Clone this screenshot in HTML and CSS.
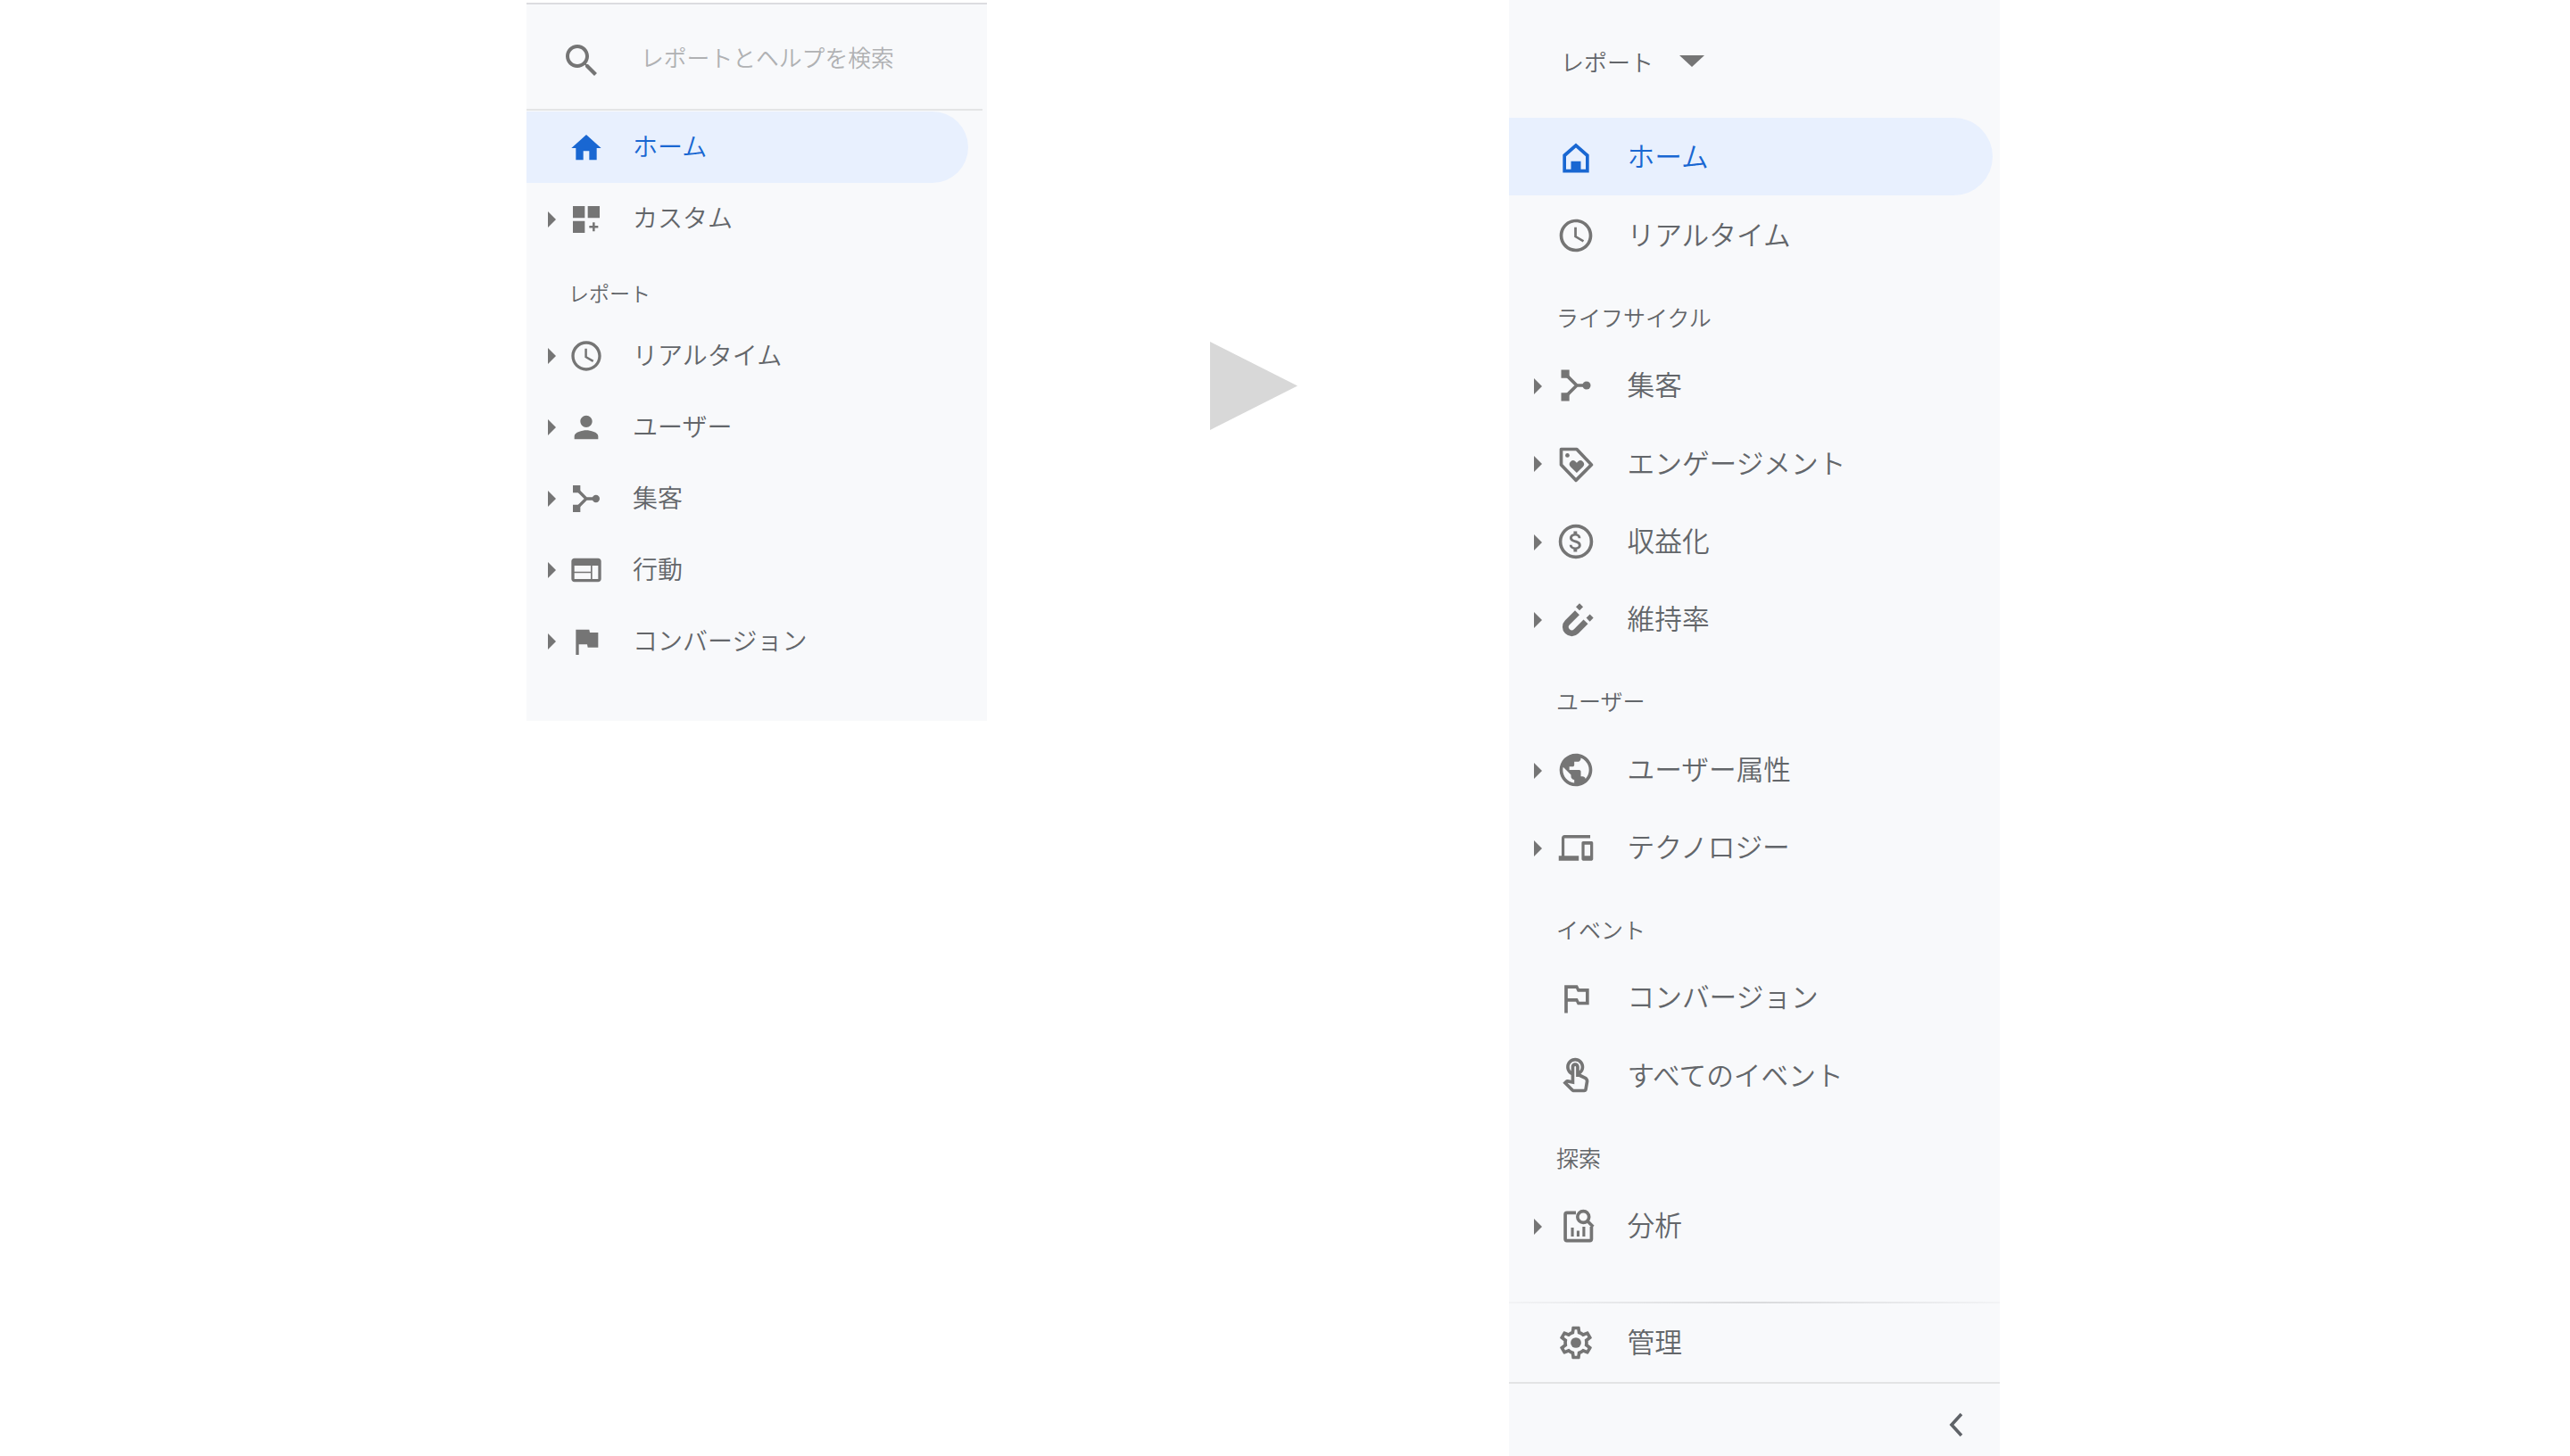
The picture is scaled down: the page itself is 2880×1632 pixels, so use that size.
FILE: index.html
```html
<!DOCTYPE html>
<html lang="ja">
<head>
    <meta charset="UTF-8">
    <title>レポート ナビゲーション</title>
    <link rel="stylesheet" href="styles.css">
</head>
<body>
    <div class="page">
        <div class="panelOld">
            <div class="searchBox">
                <svg class="searchIcon" viewBox="0 0 24 24"><path d="M15.5 14h-.79l-.28-.27C15.41 12.59 16 11.11 16 9.5 16 5.91 13.09 3 9.5 3S3 5.91 3 9.5 5.91 16 9.5 16c1.61 0 3.09-.59 4.23-1.57l.27.28v.79l5 4.99L20.49 19l-4.99-5zm-6 0C7.01 14 5 11.99 5 9.5S7.01 5 9.5 5 14 7.01 14 9.5 11.99 14 9.5 14z"/></svg>
                <span class="searchText">レポートとヘルプを検索</span>
            </div>
            <div class="row active">
                <span class="arrow none"></span>
                <svg class="icon" viewBox="0 0 24 24"><path d="M10 20v-6h4v6h5v-8h3L12 3 2 12h3v8z"/></svg>
                <span class="label labelUp">ホーム</span>
            </div>
            <div class="row">
                <span class="arrow"></span>
                <svg class="icon" viewBox="0 0 24 24"><path d="M3 3h8v8H3zM13 3h8v8h-8zM3 13h8v8H3zM16.25 14h1.5v2.25H20v1.5h-2.25V20h-1.5v-2.25H14v-1.5h2.25z"/></svg>
                <span class="label labelUp">カスタム</span>
            </div>
            <div class="heading">レポート</div>
            <div class="row">
                <span class="arrow"></span>
                <svg class="icon" viewBox="0 0 24 24"><path d="M11.99 2C6.47 2 2 6.48 2 12s4.47 10 9.99 10C17.52 22 22 17.52 22 12S17.52 2 11.99 2zM12 20c-4.42 0-8-3.58-8-8s3.58-8 8-8 8 3.58 8 8-3.58 8-8 8zm.5-13H11v6l5.25 3.15.75-1.23-4.5-2.67z"/></svg>
                <span class="label">リアルタイム</span>
            </div>
            <div class="row">
                <span class="arrow"></span>
                <svg class="icon" viewBox="0 0 24 24"><path d="M12 12c2.21 0 4-1.79 4-4s-1.79-4-4-4-4 1.79-4 4 1.79 4 4 4zm0 2c-2.67 0-8 1.34-8 4v2h16v-2c0-2.66-5.33-4-8-4z"/></svg>
                <span class="label">ユーザー</span>
            </div>
            <div class="row">
                <span class="arrow"></span>
                <svg class="icon" viewBox="0 0 24 24"><path d="M3 3h5v5H3zM3 16h5v5H3z"/><circle cx="18.5" cy="12" r="2.5"/><path class="line" d="M6 6l6 6-6 6M12 12h6"/></svg>
                <span class="label">集客</span>
            </div>
            <div class="row">
                <span class="arrow"></span>
                <svg class="icon" viewBox="0 0 24 24"><path d="M20 4H4c-1.1 0-1.99.9-1.99 2L2 18c0 1.1.9 2 2 2h16c1.1 0 2-.9 2-2V6c0-1.1-.9-2-2-2zm-5 14H4v-4h11v4zm0-5H4V9h11v4zm5 5h-4V9h4v9z"/></svg>
                <span class="label">行動</span>
            </div>
            <div class="row">
                <span class="arrow"></span>
                <svg class="icon" viewBox="0 0 24 24"><path d="M14.4 6L14 4H5v17h2v-7h5.6l.4 2h7V6z"/></svg>
                <span class="label">コンバージョン</span>
            </div>
        </div>

        <svg class="playArrow" viewBox="0 0 98 99"><path d="M0 0l98 49.5L0 99z"/></svg>

        <div class="panelNew">
            <div class="topBar">
                <span class="topLabel">レポート</span>
                <span class="topCaret"></span>
            </div>
            <div class="nav">
                <div class="row active">
                    <span class="arrow none"></span>
                    <svg class="icon" viewBox="0 0 24 24"><path fill-rule="evenodd" d="M4 21V10l8-7 8 7v11zM6 19h3v-5h6v5h3v-8l-6-5.3L6 11z"/></svg>
                    <span class="label">ホーム</span>
                </div>
                <div class="row">
                    <span class="arrow none"></span>
                    <svg class="icon" viewBox="0 0 24 24"><path d="M11.99 2C6.47 2 2 6.48 2 12s4.47 10 9.99 10C17.52 22 22 17.52 22 12S17.52 2 11.99 2zM12 20c-4.42 0-8-3.58-8-8s3.58-8 8-8 8 3.58 8 8-3.58 8-8 8zm.5-13H11v6l5.25 3.15.75-1.23-4.5-2.67z"/></svg>
                    <span class="label">リアルタイム</span>
                </div>

                <div class="heading">ライフサイクル</div>
                <div class="row">
                    <span class="arrow"></span>
                    <svg class="icon" viewBox="0 0 24 24"><path d="M3 2.5h5v5H3zM3 16.5h5v5H3z"/><circle cx="18.5" cy="12" r="2.5"/><path class="line" d="M6 5.500l6.500 6.500-6.500 6.500M12 12h6"/></svg>
                    <span class="label">集客</span>
                </div>
                <div class="row">
                    <span class="arrow"></span>
                    <svg class="icon" viewBox="0 0 24 24"><path class="line" stroke-linejoin="round" d="M3 3h9.500l9 9.500-9.500 9.500-9-9.500z"/><circle cx="6.800" cy="6.800" r="1.300"/><path d="M12.500 17.500l-3.900-3.900a2.200 2.200 0 0 1 3.100-3.100l.8.8.8-.8a2.200 2.200 0 0 1 3.100 3.100z"/></svg>
                    <span class="label">エンゲージメント</span>
                </div>
                <div class="row">
                    <span class="arrow"></span>
                    <svg class="icon" viewBox="0 0 24 24"><circle class="line" cx="12" cy="12" r="9.500"/><path transform="translate(3.600 3.600) scale(.7)" d="M11.800 10.900c-2.270-.59-3-1.200-3-2.150 0-1.090 1.010-1.850 2.700-1.850 1.780 0 2.440.85 2.500 2.100h2.210c-.07-1.720-1.120-3.300-3.210-3.810V3h-3v2.160c-1.940.42-3.500 1.680-3.500 3.610 0 2.310 1.910 3.460 4.700 4.130 2.500.6 3 1.480 3 2.410 0 .69-.49 1.790-2.700 1.790-2.060 0-2.870-.92-2.980-2.100h-2.200c.12 2.190 1.760 3.420 3.680 3.830V21h3v-2.150c1.950-.37 3.500-1.500 3.500-3.550 0-2.840-2.430-3.810-4.700-4.400z"/></svg>
                    <span class="label">収益化</span>
                </div>
                <div class="row">
                    <span class="arrow"></span>
                    <svg class="icon" viewBox="0 0 24 24"><path class="line thick" d="M12.800 7.500L6.800 13.500a3.800 3.800 0 0 0 5.400 5.400L18 13"/><path d="M14.200 1.800l2.200 2.200-2.200 2.200L12 4zM20.500 8.500l2.200 2.200-2.200 2.200-2.200-2.200z"/></svg>
                    <span class="label">維持率</span>
                </div>

                <div class="heading">ユーザー</div>
                <div class="row">
                    <span class="arrow"></span>
                    <svg class="icon" viewBox="0 0 24 24"><path d="M12 2C6.480 2 2 6.480 2 12s4.480 10 10 10 10-4.480 10-10S17.520 2 12 2zm-1 17.930c-3.950-.49-7-3.850-7-7.930 0-.62.08-1.210.21-1.790L9 15v1c0 1.100.9 2 2 2v1.930zm6.900-2.540c-.26-.81-1-1.390-1.900-1.390h-1v-3c0-.55-.45-1-1-1H8v-2h2c.55 0 1-.45 1-1V7h2c1.100 0 2-.9 2-2v-.41c2.930 1.190 5 4.060 5 7.410 0 2.080-.8 3.970-2.100 5.390z"/></svg>
                    <span class="label">ユーザー属性</span>
                </div>
                <div class="row">
                    <span class="arrow"></span>
                    <svg class="icon" viewBox="0 0 24 24"><path transform="translate(1.500 .4) scale(.875 .98)" d="M4 6h18V4H4c-1.100 0-2 .9-2 2v11H0v3h14v-3H4V6zm19 2h-6c-.55 0-1 .45-1 1v10c0 .55.45 1 1 1h6c.55 0 1-.45 1-1V9c0-.55-.45-1-1-1zm-1 9h-4v-7h4v7z"/></svg>
                    <span class="label">テクノロジー</span>
                </div>

                <div class="heading">イベント</div>
                <div class="row">
                    <span class="arrow none"></span>
                    <svg class="icon" viewBox="0 0 24 24"><path d="M14 6l-1-2H5v17h2v-7h5l1 2h7V6h-6zm4 8h-4l-1-2H7V6h5l1 2h5v6z"/></svg>
                    <span class="label">コンバージョン</span>
                </div>
                <div class="row">
                    <span class="arrow none"></span>
                    <svg class="icon" viewBox="0 0 24 24"><path d="M18.190 12.440l-3.240-1.620c1.290-1 2.120-2.560 2.120-4.320 0-3.030-2.470-5.500-5.500-5.500s-5.500 2.470-5.500 5.500c0 2.130 1.220 3.980 3 4.890v3.260c-2.150-.46-2.020-.44-2.260-.44-.53 0-1.030.21-1.410.59L4 16.220l5.090 5.090C9.520 21.750 10.120 22 10.740 22h6.300c.98 0 1.810-.7 1.970-1.670l.8-4.710c.22-1.300-.43-2.580-1.620-3.180zm-.35 2.850l-.8 4.710h-6.300c-.09 0-.17-.04-.24-.1l-3.680-3.680 4.250.89V6.500c0-.28.22-.5.5-.5s.5.22.5.5v6h1.760l3.460 1.730c.4.2.62.63.55 1.060zM8.070 6.500c0-1.930 1.570-3.500 3.500-3.500s3.500 1.570 3.500 3.500c0 .95-.38 1.810-1 2.440V6.500c0-1.380-1.120-2.500-2.500-2.500s-2.500 1.120-2.500 2.500v2.440c-.62-.63-1-1.490-1-2.440z"/></svg>
                    <span class="label">すべてのイベント</span>
                </div>

                <div class="heading">探索</div>
                <div class="row">
                    <span class="arrow"></span>
                    <svg class="icon" viewBox="0 0 24 24"><g transform="translate(1 -.5)"><path class="line" d="M11 4H5.500a1 1 0 0 0-1 1v15a1 1 0 0 0 1 1h14a1 1 0 0 0 1-1v-7.500"/><path d="M8 13h1.700v5.500H8zM11.500 15h1.700v3.500h-1.700zM15 12.500h1.700v6H15z"/><circle class="line" cx="15.500" cy="6.500" r="3.500"/><path class="line" d="M18 9l3.500 3.500"/></g></svg>
                    <span class="label">分析</span>
                </div>
            </div>
            <div class="adminRow">
                <div class="row">
                    <span class="arrow none"></span>
                    <svg class="icon" viewBox="0 0 24 24"><path d="M19.430 12.980c.04-.32.07-.64.07-.98 0-.34-.03-.66-.07-.98l2.110-1.650c.19-.15.24-.42.12-.64l-2-3.460c-.09-.16-.26-.25-.44-.25-.06 0-.12.01-.17.03l-2.490 1c-.52-.4-1.080-.73-1.690-.98l-.38-2.650C14.460 2.180 14.250 2 14 2h-4c-.25 0-.46.18-.49.42l-.38 2.650c-.61.25-1.170.59-1.690.98l-2.490-1c-.06-.02-.12-.03-.18-.03-.17 0-.34.09-.43.25l-2 3.460c-.13.22-.07.49.12.64l2.110 1.650c-.04.32-.07.65-.07.98 0 .33.03.66.07.98l-2.110 1.650c-.19.15-.24.42-.12.64l2 3.460c.09.16.26.25.44.25.06 0 .12-.01.17-.03l2.490-1c.52.4 1.080.73 1.690.98l.38 2.650c.03.24.24.42.49.42h4c.25 0 .46-.18.49-.42l.38-2.650c.61-.25 1.170-.59 1.690-.98l2.490 1c.06.02.12.03.18.03.17 0 .34-.09.43-.25l2-3.460c.12-.22.07-.49-.12-.64l-2.110-1.650zm-1.980-1.710c.04.31.05.52.05.73 0 .21-.02.43-.05.73l-.14 1.130.89.7 1.080.84-.7 1.210-1.270-.51-1.040-.42-.9.68c-.43.32-.84.56-1.250.73l-1.060.43-.16 1.130-.2 1.350h-1.400l-.19-1.350-.16-1.130-1.060-.43c-.43-.18-.83-.41-1.230-.71l-.91-.7-1.060.43-1.270.51-.7-1.210 1.080-.84.89-.7-.14-1.130c-.03-.31-.05-.54-.05-.74s.02-.43.05-.73l.14-1.130-.89-.7-1.080-.84.7-1.210 1.270.51 1.040.42.9-.68c.43-.32.84-.56 1.250-.73l1.060-.43.16-1.130.2-1.350h1.390l.19 1.350.16 1.130 1.060.43c.43.18.83.41 1.230.71l.91.7 1.060-.43 1.270-.51.7 1.210-1.070.85-.89.7.14 1.130z"/><circle cx="12" cy="12" r="3.200"/></svg>
                    <span class="label">管理</span>
                </div>
            </div>
            <div class="collapseBar">
                <svg class="chevron" viewBox="0 0 18 30"><path d="M15 3L4 15l11 12"/></svg>
            </div>
        </div>
    </div>
</body>
</html>
```

FILE: styles.css
```css
* {
    margin: 0;
    padding: 0;
    box-sizing: border-box;
}

body {
    font-family: "Noto Sans CJK JP", "Noto Sans", sans-serif;
    font-weight: 350;
    background: #ffffff;
    color: #63666a;
}

.page {
    display: flex;
    align-items: flex-start;
    height: 1632px;
    padding-left: 590px;
    overflow: hidden;
}

.panelOld {
    width: 516px;
    height: 805px;
    margin-top: 3px;
    background: #f8f9fb;
    border-top: 2px solid #dcdce0;
}

.panelNew {
    display: flex;
    flex-direction: column;
    width: 550px;
    height: 1632px;
    background: #f8f9fb;
}

.playArrow {
    flex-shrink: 0;
    width: 98px;
    height: 99px;
    margin: 383px 237px 0 250px;
    fill: #d8d8d8;
}

/* search */
.searchBox {
    display: flex;
    align-items: center;
    width: 511px;
    height: 119px;
    margin-bottom: 1px;
    padding-left: 38px;
    border-bottom: 2px solid #e4e5e6;
}

.searchIcon {
    width: 48px;
    height: 48px;
    margin-top: 9px;
    fill: #757575;
}

.searchText {
    margin-left: 42px;
    font-size: 25.8px;
    color: #b0b1b3;
}

/* rows */
.row {
    display: flex;
    align-items: center;
    height: 80px;
    padding-left: 20px;
}

.row.active {
    color: #1967d2;
    background: #e8f0fe;
    border-radius: 0 44px 44px 0;
}

.arrow {
    width: 16px;
    height: 18px;
    margin: 1px -4px 0 4px;
    border-left: 9px solid #757575;
    border-top: 9px solid transparent;
    border-bottom: 9px solid transparent;
}

.arrow.none {
    border-color: transparent;
}

.icon {
    flex-shrink: 0;
    width: 40px;
    height: 40px;
    margin: 1px 0 0 11px;
    fill: #757575;
}

.row.active .icon {
    fill: #1967d2;
}

.line {
    fill: none;
    stroke: #757575;
    stroke-width: 2;
}

.thick {
    stroke-width: 3.8;
}

.label {
    margin: -3px 0 0 32px;
    font-size: 28px;
    line-height: 1;
    white-space: nowrap;
}

.label.labelUp {
    margin-top: -5px;
}

.heading {
    height: 73px;
    padding: 31px 0 0 47px;
    font-size: 23px;
    line-height: 24px;
}

.panelOld .row.active {
    width: 495px;
}

/* new panel */
.topBar {
    display: flex;
    align-items: center;
    height: 132px;
    padding: 0 0 0 58px;
}

.topLabel {
    margin-top: 4px;
    font-size: 26px;
}

.topCaret {
    margin: 5px 0 0 29px;
    border-top: 13px solid #757575;
    border-left: 14px solid transparent;
    border-right: 14px solid transparent;
}

.nav {
    flex: 1;
}

.panelNew .row {
    height: 87.4px;
    padding-left: 24px;
}

.panelNew .row.active {
    width: 542px;
}

.panelNew .arrow {
    margin-top: 3px;
}

.panelNew .icon {
    width: 44px;
    height: 44px;
    margin: 2px 0 0 13px;
}

.panelNew .label {
    margin: -2px 0 0 35.5px;
    font-size: 30.7px;
}

.panelNew .heading {
    height: 81px;
    padding: 35px 0 0 53px;
    font-size: 25px;
    line-height: 26px;
}

.adminRow {
    display: flex;
    align-items: center;
    height: 94px;
    border-top: 2px solid transparent;
    border-bottom: 2px solid #e3e4e5;
    background: linear-gradient(90deg, #f2f3f5, #d9dadc 50%, #f2f3f5) top / 100% 2px no-repeat;
}

.collapseBar {
    display: flex;
    justify-content: flex-end;
    align-items: center;
    height: 81px;
    padding: 10px 40px 0 0;
}

.chevron {
    width: 18px;
    height: 30px;
    fill: none;
    stroke: #5f6368;
    stroke-width: 3.6;
}
```
